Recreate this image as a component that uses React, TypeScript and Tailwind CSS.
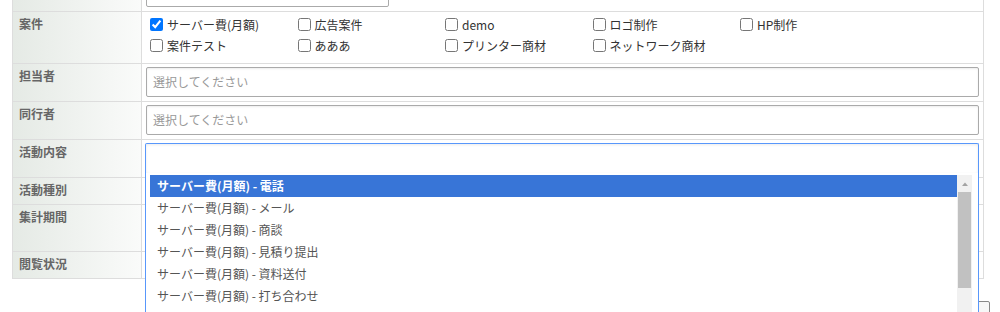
import type { ReactNode } from "react";

const FONT = { fontFamily: '"Noto Sans CJK JP", "Noto Sans", sans-serif' };

const CASES = [
  { label: "サーバー費(月額)", checked: true },
  { label: "広告案件", checked: false },
  { label: "demo", checked: false },
  { label: "ロゴ制作", checked: false },
  { label: "HP制作", checked: false },
  { label: "案件テスト", checked: false },
  { label: "あああ", checked: false },
  { label: "プリンター商材", checked: false },
  { label: "ネットワーク商材", checked: false },
];

const ACTIVITIES = [
  "サーバー費(月額) - 電話",
  "サーバー費(月額) - メール",
  "サーバー費(月額) - 商談",
  "サーバー費(月額) - 見積り提出",
  "サーバー費(月額) - 資料送付",
  "サーバー費(月額) - 打ち合わせ",
];

function Row({
  label,
  height,
  children,
}: {
  label: string;
  height: string;
  children?: ReactNode;
}) {
  return (
    <div className={`grid grid-cols-[129px_1fr] border-b border-[#dddddd] ${height}`}>
      <div className="border-r border-[#dddddd] bg-linear-to-r from-[#e5eae5] to-[#fafbfa] px-[6px] pt-[4px] text-[12px] leading-[15px] font-bold text-[#666]">
        {label}
      </div>
      <div className="relative">{children}</div>
    </div>
  );
}

function SelectInput() {
  return (
    <div className="mx-[4px] mt-[3px] flex h-[30px] items-center rounded-[2px] border border-[#aaaaaa] px-[6px] text-[12px] text-[#999] shadow-[inset_0_1px_2px_rgba(0,0,0,0.08)]">
      選択してください
    </div>
  );
}

export default function App() {
  return (
    <div className="h-[312px] w-[1000px] overflow-hidden bg-white" style={FONT}>
      <div className="pl-[12px]">
        <div className="w-[972px] border-x border-[#dddddd]">
          {/* top row, cut off */}
          <div className="-mt-[26px] grid h-[38px] grid-cols-[129px_1fr] border-b border-[#dddddd]">
            <div className="border-r border-[#dddddd] bg-linear-to-r from-[#e5eae5] to-[#fafbfa]" />
            <div className="pt-[3px] pl-[4px]">
              <div className="h-[30px] w-[243px] rounded-[2px] border border-[#aaaaaa]" />
            </div>
          </div>

          <Row label="案件" height="h-[52px]">
            <div className="grid grid-cols-[repeat(5,147.5px)] pt-[2px] pl-[8px] text-[12px] leading-[21px] text-[#333]">
              {CASES.map((c, i) => (
                <label key={i} className="flex items-center gap-[4px] whitespace-nowrap">
                  <input type="checkbox" defaultChecked={c.checked} className="m-0 h-[13px] w-[13px]" />
                  {c.label}
                </label>
              ))}
            </div>
          </Row>

          <Row label="担当者" height="h-[38px]">
            <SelectInput />
          </Row>

          <Row label="同行者" height="h-[38px]">
            <SelectInput />
          </Row>

          <Row label="活動内容" height="h-[38px]">
            <div className="relative z-10 mx-[3px] mt-[3px] mr-[4px]">
              <div className="h-[30px] rounded-t-[2px] border border-b-0 border-[#5897fb] bg-white shadow-[inset_0_1px_3px_rgba(0,0,0,0.08)]" />
              {/* dropdown */}
              <div className="absolute top-[30px] right-0 left-0 h-[150px] border-x border-[#5897fb] bg-white pt-[2px] pr-[6px] pl-[4px]">
                <div className="flex">
                  <ul className="flex-1 text-[12px] text-[#555]">
                    {ACTIVITIES.map((a, i) => (
                      <li
                        key={i}
                        className={`flex h-[22px] items-center pl-[7px] ${
                          i === 0 ? "bg-[#3875d7] font-bold text-white" : ""
                        }`}
                      >
                        {a}
                      </li>
                    ))}
                  </ul>
                  {/* scrollbar */}
                  <div className="flex h-[150px] w-[15px] flex-col items-center bg-[#f1f1f1]">
                    <svg width="8" height="16" viewBox="0 0 8 16" className="mt-[1px]">
                      <path d="M1 10 L4 6.5 L7 10 Z" fill="#a3a3a3" />
                    </svg>
                    <div className="h-[96px] w-[13px] bg-[#c1c1c1]" />
                  </div>
                </div>
              </div>
            </div>
          </Row>

          <Row label="活動種別" height="h-[27px]" />
          <Row label="集計期間" height="h-[47px]" />
          <Row label="閲覧状況" height="h-[27px]" />
        </div>

        <div className="flex justify-end pr-[10px]">
          <div className="mt-[22px] h-[24px] w-[80px] rounded-[2px] border border-[#888] bg-[#f7f7f7]" />
        </div>
      </div>
    </div>
  );
}
